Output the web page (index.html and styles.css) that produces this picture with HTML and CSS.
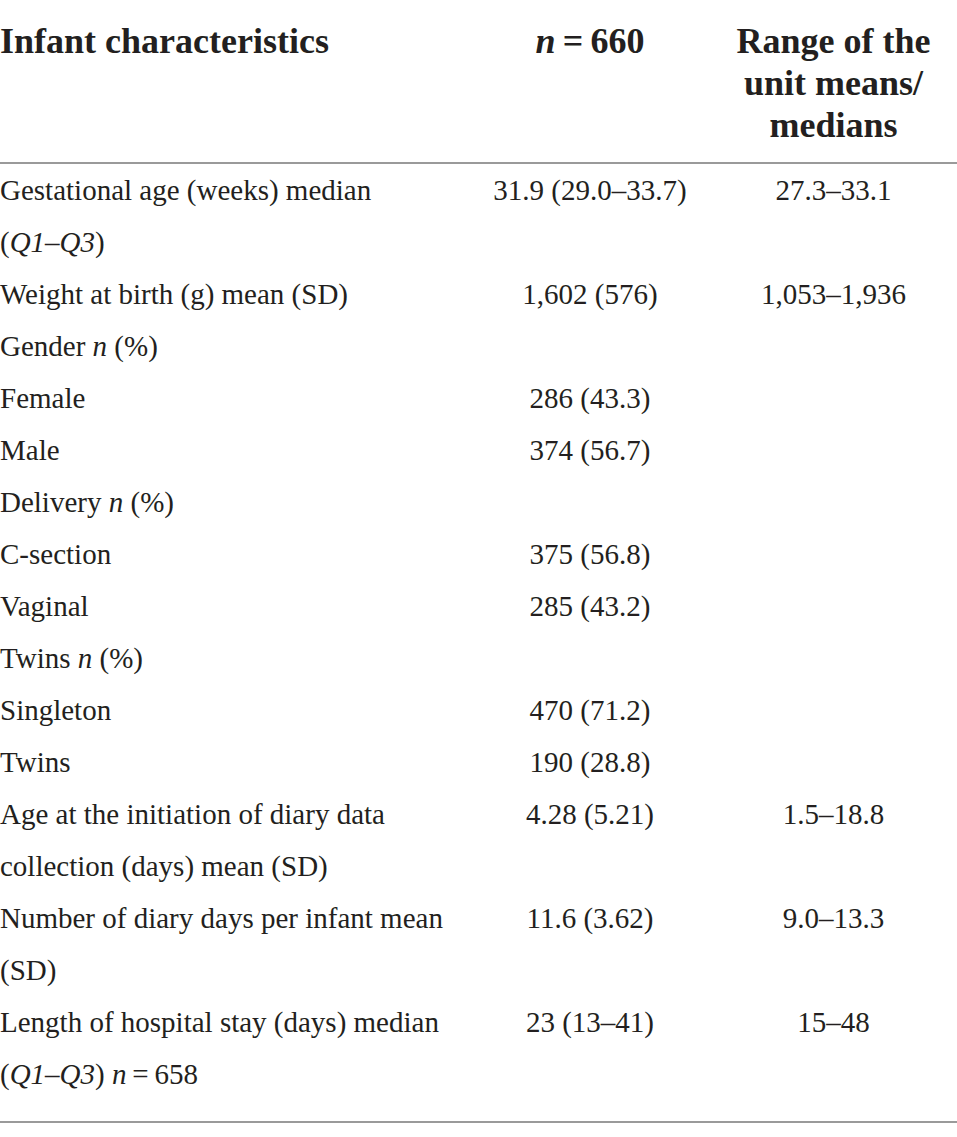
FILE: index.html
```html
<!DOCTYPE html>
<html lang="en">
<head>
<meta charset="utf-8">
<title>Infant characteristics</title>
<link rel="stylesheet" href="styles.css">
</head>
<body>
<div class="table">
  <div class="head row">
    <div class="c1">Infant characteristics</div>
    <div class="c2"><i>n</i>&#8201;=&#8201;660</div>
    <div class="c3">Range of the<br>unit means/<br>medians</div>
  </div>
  <div class="body">
    <div class="row"><div class="c1">Gestational age (weeks) median<br>(<i>Q1–Q3</i>)</div><div class="c2">31.9 (29.0–33.7)</div><div class="c3">27.3–33.1</div></div>
    <div class="row"><div class="c1">Weight at birth (g) mean (SD)</div><div class="c2">1,602 (576)</div><div class="c3">1,053–1,936</div></div>
    <div class="row"><div class="c1">Gender <i>n</i> (%)</div><div class="c2"></div><div class="c3"></div></div>
    <div class="row"><div class="c1">Female</div><div class="c2">286 (43.3)</div><div class="c3"></div></div>
    <div class="row"><div class="c1">Male</div><div class="c2">374 (56.7)</div><div class="c3"></div></div>
    <div class="row"><div class="c1">Delivery <i>n</i> (%)</div><div class="c2"></div><div class="c3"></div></div>
    <div class="row"><div class="c1">C-section</div><div class="c2">375 (56.8)</div><div class="c3"></div></div>
    <div class="row"><div class="c1">Vaginal</div><div class="c2">285 (43.2)</div><div class="c3"></div></div>
    <div class="row"><div class="c1">Twins <i>n</i> (%)</div><div class="c2"></div><div class="c3"></div></div>
    <div class="row"><div class="c1">Singleton</div><div class="c2">470 (71.2)</div><div class="c3"></div></div>
    <div class="row"><div class="c1">Twins</div><div class="c2">190 (28.8)</div><div class="c3"></div></div>
    <div class="row"><div class="c1">Age at the initiation of diary data<br>collection (days) mean (SD)</div><div class="c2">4.28 (5.21)</div><div class="c3">1.5–18.8</div></div>
    <div class="row"><div class="c1">Number of diary days per infant mean<br>(SD)</div><div class="c2">11.6 (3.62)</div><div class="c3">9.0–13.3</div></div>
    <div class="row"><div class="c1">Length of hospital stay (days) median<br>(<i>Q1–Q3</i>) <i>n</i>&#8201;=&#8201;658</div><div class="c2">23 (13–41)</div><div class="c3">15–48</div></div>
  </div>
</div>
</body>
</html>
```

FILE: styles.css
```css
html, body {
  margin: 0;
  padding: 0;
  background: #ffffff;
}

body {
  font-family: "Liberation Serif", "Times New Roman", serif;
  color: #231f20;
  width: 957px;
}

.table {
  display: flex;
  flex-direction: column;
}

.row {
  display: grid;
  grid-template-columns: 470px 240px 1fr;
}

.c1 {
  text-align: left;
  white-space: nowrap;
}

.c2, .c3 {
  text-align: center;
  white-space: nowrap;
}

.head {
  font-size: 36px;
  font-weight: bold;
  line-height: 42px;
  padding: 20px 0 16px;
  border-bottom: 2px solid #9a9a9a;
}

.body {
  font-size: 29px;
  line-height: 52px;
  padding-bottom: 21px;
  border-bottom: 2px solid #9a9a9a;
}
```
